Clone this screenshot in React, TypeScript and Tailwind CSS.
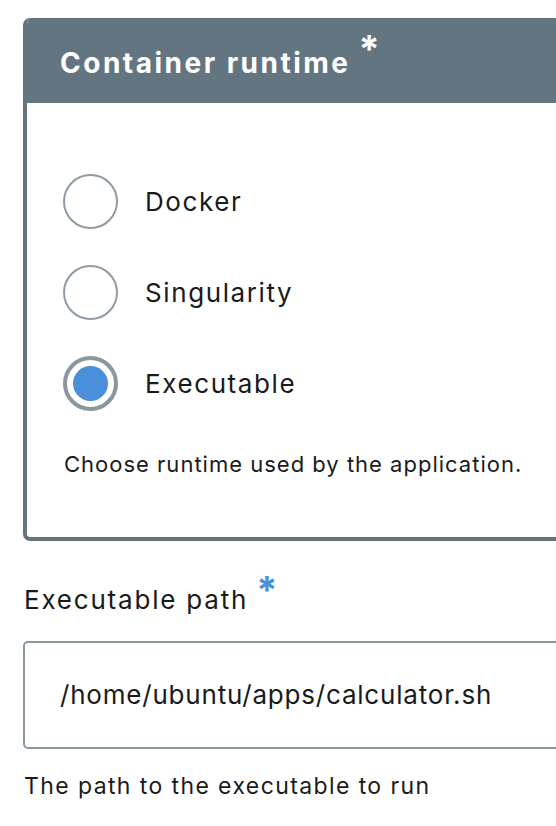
const options = [
  { label: "Docker", checked: false },
  { label: "Singularity", checked: false },
  { label: "Executable", checked: true },
];

function Radio({ checked }: { checked: boolean }) {
  if (checked) {
    return (
      <span className="flex h-[55px] w-[55px] shrink-0 items-center justify-center rounded-full border-[4px] border-[#8b979f] bg-white">
        <span className="h-[35px] w-[35px] rounded-full bg-[#4a8fd9]" />
      </span>
    );
  }
  return <span className="h-[55px] w-[55px] shrink-0 rounded-full border-2 border-[#8f9ba3] bg-white" />;
}

export default function App() {
  return (
    <div
      className="min-h-[826px] w-[556px] overflow-hidden bg-white pl-[23px] pt-[18px]"
      style={{ fontFamily: "Inter, 'Open Sans', sans-serif" }}
    >
      {/* Fieldset card */}
      <div className="w-[560px] overflow-hidden rounded-l-[7px] border-b-[4px] border-l-[4px] border-[#647582]">
        <div className="flex h-[85px] items-start bg-[#647582] pl-[33px] pt-[25px]">
          <span className="text-[28px] font-bold leading-[40px] tracking-[2.5px] text-white">Container runtime</span>
          <span className="ml-[8px] mt-[-13px] text-[38px] font-bold leading-none text-white">*</span>
        </div>
        <div className="pl-[36px] pt-[71px] pb-[62px]">
          <div className="flex flex-col gap-[36px]">
            {options.map((o) => (
              <div key={o.label} className="flex items-center gap-[27px]">
                <Radio checked={o.checked} />
                <span className="text-[26px] leading-none tracking-[1.6px] text-[#1a1a1a]">{o.label}</span>
              </div>
            ))}
          </div>
          <p className="mt-[42px] pl-[1px] text-[22px] leading-none tracking-[1px] text-[#1a1a1a]">
            Choose runtime used by the application.
          </p>
        </div>
      </div>

      {/* Executable path */}
      <div className="mt-[40px] flex items-start">
        <span className="pl-[1px] text-[26px] leading-[38px] tracking-[1.8px] text-[#1a1a1a]">Executable path</span>
        <span className="ml-[8px] mt-[-10px] text-[38px] font-bold leading-none text-[#4a8fd9]">*</span>
      </div>
      <div className="mt-[22px] flex h-[108px] w-[560px] items-center rounded-[5px] border-2 border-[#8b979f] pl-[35px]">
        <span className="text-[26px] leading-none tracking-[0.8px] text-[#1a1a1a]">/home/ubuntu/apps/calculator.sh</span>
      </div>
      <p className="mt-[26px] pl-[1px] text-[23px] leading-none tracking-[1.4px] text-[#1a1a1a]">
        The path to the executable to run
      </p>
    </div>
  );
}
